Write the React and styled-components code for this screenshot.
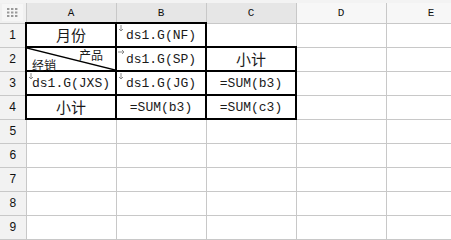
import React from "react";
import styled, { createGlobalStyle } from "styled-components";

const Global = createGlobalStyle`
  html, body { margin: 0; padding: 0; background: #ffffff; overflow: hidden; }
  body { font-family: "Liberation Mono", "Noto Sans CJK SC", monospace; }
`;

const Page = styled.div`
  width: 451px;
  height: 240px;
  overflow: hidden;
  background: #ffffff;
`;

const TopStrip = styled.div`
  height: 3px;
  background: #f3f3f3;
`;

const Sheet = styled.table`
  border-collapse: collapse;
  table-layout: fixed;
  width: 476px;
`;

const HeadRow = styled.tr`
  height: 20px;
`;

const Row = styled.tr`
  height: 24px;
`;

const Corner = styled.th`
  padding: 0;
  background: #f0f0f0;
  border-right: 1px solid #c8c8c8;
  border-bottom: 1px solid #c8c8c8;
`;

const CornerBox = styled.div`
  margin: 0 auto;
  width: 21px;
  height: 17px;
  background: #f6f6f6;
  display: flex;
  align-items: center;
  justify-content: center;
`;

const ColHead = styled.th`
  padding: 0;
  font-family: "Liberation Mono", monospace;
  font-weight: normal;
  font-size: 11px;
  color: #111;
  background: ${(p) => (p.$active ? "#e6e6e6" : "#f7f7f7")};
  border-right: 1px solid #c8c8c8;
  border-bottom: 1px solid #c8c8c8;
`;

const RowHead = styled.th`
  padding: 0;
  font-family: "Liberation Sans", sans-serif;
  font-weight: normal;
  font-size: 12px;
  color: #111;
  background: #f2f2f2;
  border-right: 1px solid #c8c8c8;
  border-bottom: 1px solid #c8c8c8;
`;

const Cell = styled.td`
  position: relative;
  padding: 0;
  text-align: center;
  vertical-align: middle;
  font-family: "Liberation Mono", "Noto Sans CJK SC", monospace;
  font-size: ${(p) => (p.$cjk ? "15px" : "13px")};
  color: #1a1a1a;
  white-space: nowrap;
  border: 1px solid #c8c8c8;
  ${(p) => p.$boxed && "border: 2px solid #000;"}
`;

const Marker = styled.svg`
  position: absolute;
  left: 1px;
  top: 1px;
`;

const Slash = styled.svg`
  position: absolute;
  inset: 0;
  width: 100%;
  height: 100%;
`;

const SlashTop = styled.span`
  position: absolute;
  right: 12px;
  top: 0px;
  font-size: 12px;
  font-family: "Noto Sans CJK SC", sans-serif;
  line-height: 13px;
`;

const SlashBottom = styled.span`
  position: absolute;
  left: 5px;
  bottom: -1px;
  font-size: 12px;
  font-family: "Noto Sans CJK SC", sans-serif;
  line-height: 13px;
`;

const Down = () => (
  <Marker width="6" height="7" viewBox="0 0 6 7">
    <path d="M3 0V6M1 4L3 6L5 4" stroke="#8a8a8a" strokeWidth="1" fill="none" />
  </Marker>
);

const Right = () => (
  <Marker width="7" height="6" viewBox="0 0 7 6">
    <path d="M0 3H6M4 1L6 3L4 5" stroke="#8a8a8a" strokeWidth="1" fill="none" />
  </Marker>
);

const GridIcon = () => (
  <svg width="11" height="9" viewBox="0 0 11 9">
    {[0, 4, 8].map((x) =>
      [0, 3.5, 7].map((y) => (
        <rect key={`${x}-${y}`} x={x} y={y} width="2.4" height="2" fill="#9a9a9a" />
      ))
    )}
  </svg>
);

const cols = ["A", "B", "C", "D", "E"];

export default function App() {
  const empty = [5, 6, 7, 8, 9];
  return (
    <Page>
      <Global />
      <TopStrip />
      <Sheet>
        <colgroup>
          <col style={{ width: 26 }} />
          {cols.map((c) => (
            <col key={c} style={{ width: 90 }} />
          ))}
        </colgroup>
        <thead>
          <HeadRow>
            <Corner>
              <CornerBox>
                <GridIcon />
              </CornerBox>
            </Corner>
            {cols.map((c, i) => (
              <ColHead key={c} $active={i < 3}>
                {c}
              </ColHead>
            ))}
          </HeadRow>
        </thead>
        <tbody>
          <Row>
            <RowHead>1</RowHead>
            <Cell $boxed $cjk>月份</Cell>
            <Cell $boxed>
              <Down />
              ds1.G(NF)
            </Cell>
            <Cell />
            <Cell />
            <Cell />
          </Row>
          <Row>
            <RowHead>2</RowHead>
            <Cell $boxed>
              <Slash viewBox="0 0 90 23" preserveAspectRatio="none">
                <line x1="0" y1="0" x2="90" y2="23" stroke="#000" strokeWidth="1.4" />
              </Slash>
              <SlashTop>产品</SlashTop>
              <SlashBottom>经销</SlashBottom>
            </Cell>
            <Cell $boxed>
              <Right />
              ds1.G(SP)
            </Cell>
            <Cell $boxed $cjk>小计</Cell>
            <Cell />
            <Cell />
          </Row>
          <Row>
            <RowHead>3</RowHead>
            <Cell $boxed>
              <Down />
              ds1.G(JXS)
            </Cell>
            <Cell $boxed>
              <Down />
              ds1.G(JG)
            </Cell>
            <Cell $boxed>=SUM(b3)</Cell>
            <Cell />
            <Cell />
          </Row>
          <Row>
            <RowHead>4</RowHead>
            <Cell $boxed $cjk>小计</Cell>
            <Cell $boxed>=SUM(b3)</Cell>
            <Cell $boxed>=SUM(c3)</Cell>
            <Cell />
            <Cell />
          </Row>
          {empty.map((n) => (
            <Row key={n}>
              <RowHead>{n}</RowHead>
              {cols.map((c) => (
                <Cell key={c} />
              ))}
            </Row>
          ))}
          <Row>
            <RowHead />
            {cols.map((c) => (
              <Cell key={c} />
            ))}
          </Row>
        </tbody>
      </Sheet>
    </Page>
  );
}
